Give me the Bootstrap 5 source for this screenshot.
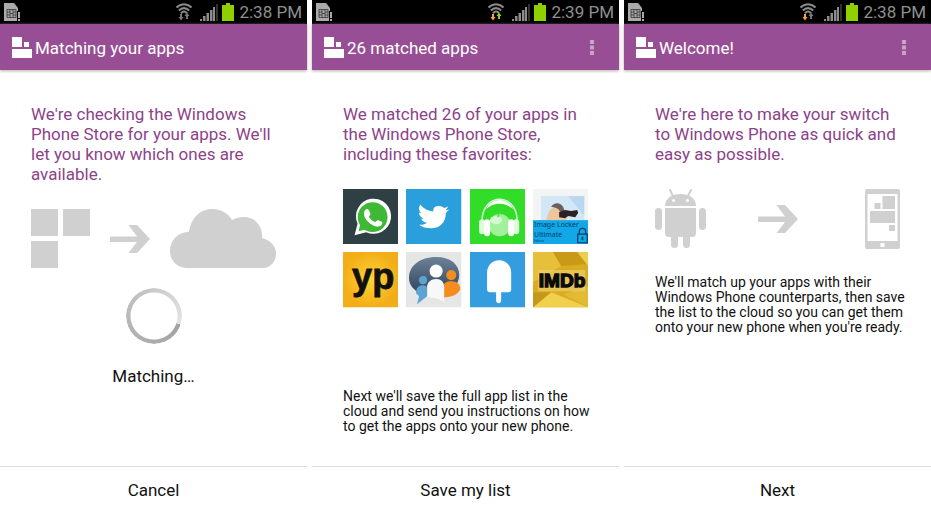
<!DOCTYPE html>
<html lang="en">
<head>
<meta charset="utf-8">
<meta name="viewport" content="width=device-width, initial-scale=1">
<title>Switch to Windows Phone</title>
<link href="https://cdn.jsdelivr.net/npm/bootstrap@5.3.0/dist/css/bootstrap.min.css" rel="stylesheet">
<style>
body { font-family: Roboto, "Liberation Sans", sans-serif; color: #111; }
.screens { gap: 5px; }
.screen { flex: 1 1 0; min-width: 0; }
.statusbar { height: 24px; background: #000; color: #8f8f8f; font-size: 17px; line-height: 24px; padding: 0 5px 0 4px; }
.statusbar .clock { margin-left: 5px; }
.appbar { height: 46px; background: #984e94; color: #fff; padding: 2px 12px 0; box-shadow: 0 1px 3px #b5b0a8; }
.appbar h1 { font-size: 17px; line-height: 24px; font-weight: 400; margin-left: 3px; }
.overflow-btn { width: 30px; height: 40px; }
.content { padding: 34px 31px 24px; }
.lead-text { color: #8c4389; font-size: 17px; line-height: 20px; margin: 0 -6px 25px 0; }
.note { font-size: 14px; line-height: 15px; margin-right: -6px; }
.journey { margin-bottom: 26px; }
.phone-cell { width: 51px; }
.tiles { display: grid; grid-template-columns: repeat(4, 1fr); gap: 8px; margin-bottom: 81px; }
.tiles svg { display: block; width: 100%; height: auto; }
.ring { width: 56px; height: 56px; border-radius: 50%;
  background: conic-gradient(from 108deg, #a3a3a3, #b0b0b0 30%, #c2c2c2 60%, #e4e4e4);
  -webkit-mask: radial-gradient(circle, transparent 23px, #000 24px); mask: radial-gradient(circle, transparent 23px, #000 24px); }
.matching { font-size: 17px; line-height: 24px; }
.footer-btn { height: 46px; border-top: 1px solid #ddd; font-size: 17px; line-height: 24px; color: #111; }
</style>
<script src="https://cdn.jsdelivr.net/npm/bootstrap@5.3.0/dist/js/bootstrap.bundle.min.js"></script>
</head>
<body class="bg-white">
<svg class="d-none" aria-hidden="true">
  <symbol id="sim" viewBox="0 0 17 20">
    <path d="M0 1h10l4 5v13H0z" fill="#aaa"/>
    <path d="M3 7.500h9v8H3zM6 7.500v8M9 7.500v8M3 10h3M9 10h3M3 13h3M9 13h3M6 11.500h3" fill="none" stroke="#333" stroke-width=".8"/>
    <path d="M13 9h4v11h-4z" fill="#000"/><path d="M14 10h2v6h-2zM14 17h2v2h-2z" fill="#aaa"/>
  </symbol>
  <symbol id="wifi" viewBox="0 0 16 18">
    <g fill="none" stroke="#8c8c8c" stroke-width="2"><path d="M.5 4.500Q8-2 15.500 4.500M2.800 7.500Q8 2.800 13.200 7.500M5 10.200Q8 7 11 10.200"/></g>
    <path d="M4 11h2v3h1.500L5 17.500 2.500 14H4z" fill="var(--down)"/>
    <path d="M10 16h2v-3h1.500L11 9.500 8.500 13H10z" fill="var(--up)"/>
  </symbol>
  <symbol id="signal" viewBox="0 0 18 18">
    <path d="M0 16h2v2H0zM3 13h2.500v5H3zM6.500 10H9v8H6.500zM10 7h2.500v11H10zM13 4h2v14h-2z" fill="#8c8c8c"/><path d="M16 1h2v17h-2z" fill="#333"/>
  </symbol>
  <symbol id="battery" viewBox="0 0 12 18"><path d="M0 2h4V0h4v2h4v16H0z" fill="#8fd000"/></symbol>
  <symbol id="logo" viewBox="0 0 20 22"><path d="M0 0h10v10H0zM12 5h5v5h-5zM0 12h20v9H0z" fill="#fff"/></symbol>
  <symbol id="dots" viewBox="0 0 4 16"><path d="M0 0h4v4H0zM0 5.500h4v4H0zM0 11h4v4H0z" fill="#c9a3c7"/></symbol>
  <symbol id="arrow" viewBox="0 0 40 28"><path d="M0 11.500h27L18.500 0H27l13 14-13 14h-8.500L27 17H0z" fill="#d0d0d0"/></symbol>
</svg>

<main class="screens d-flex min-vh-100">
  <section class="screen d-flex flex-column">
    <div class="statusbar d-flex align-items-center">
      <svg class="me-auto" width="17" height="20"><use href="#sim"/></svg>
      <svg width="16" height="18" style="--down:#777;--up:#777"><use href="#wifi"/></svg>
      <svg class="ms-2" width="18" height="18"><use href="#signal"/></svg>
      <svg class="ms-1" width="12" height="18"><use href="#battery"/></svg>
      <span class="clock">2:38 PM</span>
    </div>
    <header class="appbar d-flex align-items-center">
      <svg width="20" height="22"><use href="#logo"/></svg>
      <h1 class="mb-0">Matching your apps</h1>
    </header>
    <div class="content flex-grow-1">
      <p class="lead-text">We're checking the Windows Phone Store for your apps. We'll let you know which ones are available.</p>
      <div class="d-flex align-items-center justify-content-between">
        <svg width="59" height="59" viewBox="0 0 59 59"><path d="M0 0h27v27H0zM32 0h27v27H32zM0 32h27v27H0z" fill="#d0d0d0"/></svg>
        <svg width="40" height="28"><use href="#arrow"/></svg>
        <svg width="106" height="59" viewBox="0 0 106 59"><path d="M16 59C6 58 0 51 0 42C0 31 8 23 19 23C21 9 30 0 42 0C51 0 58 4 62 11C66 9 69 8 74 8C85 8 93 17 92 29C100 31 106 37 106 44C106 53 101 58 94 59z" fill="#d0d0d0"/></svg>
      </div>
      <div class="d-flex flex-column align-items-center pt-3 mt-1" role="status">
        <div class="ring"></div>
        <div class="matching mt-3 pt-1">Matching…</div>
      </div>
    </div>
    <button type="button" class="footer-btn btn rounded-0 border-start-0 border-end-0 border-bottom-0 p-0">Cancel</button>
  </section>

  <section class="screen d-flex flex-column">
    <div class="statusbar d-flex align-items-center">
      <svg class="me-auto" width="17" height="20"><use href="#sim"/></svg>
      <svg width="16" height="18" style="--down:#f7a541;--up:#8fd000"><use href="#wifi"/></svg>
      <svg class="ms-2" width="18" height="18"><use href="#signal"/></svg>
      <svg class="ms-1" width="12" height="18"><use href="#battery"/></svg>
      <span class="clock">2:39 PM</span>
    </div>
    <header class="appbar d-flex align-items-center">
      <svg width="20" height="22"><use href="#logo"/></svg>
      <h1 class="mb-0">26 matched apps</h1>
      <button type="button" class="overflow-btn btn p-0 border-0 ms-auto d-flex align-items-center justify-content-center" aria-label="More options"><svg width="4" height="16"><use href="#dots"/></svg></button>
    </header>
    <div class="content flex-grow-1">
      <p class="lead-text">We matched 26 of your apps in the Windows Phone Store, including these favorites:</p>
      <div class="tiles">
        <svg viewBox="0 0 55 55" role="img" aria-label="WhatsApp">
          <rect width="55" height="55" fill="#2f4044"/>
          <path d="M11.500 46l3-11.500A17.500 17.500 0 1 1 23 43z" fill="#fff"/>
          <circle cx="29.500" cy="28" r="14.800" fill="#3fb835"/><path d="M15.500 42l2-8 6 6z" fill="#3fb835"/>
          <path d="M22 21c1.500-1.500 3-1.500 4 .5l1.300 3c.4 1-.8 2-1.500 3 1.300 2.600 3.600 4.400 6.300 5.400 1-1 1.900-2.300 3-1.800l3.400 1.600c1.500.9.4 3-1 4-3.500 2.300-9.500-.8-12.500-4C21.500 29.500 19.500 24.500 22 21z" fill="#fff"/>
        </svg>
        <svg viewBox="0 0 55 55" role="img" aria-label="Twitter">
          <rect width="55" height="55" fill="#2a9fdb"/>
          <path d="M13 35.500c3.500.3 6-.5 8-2-3-.3-5-1.800-5.800-4h2.500c-3-1-4.700-3.300-4.800-6l2.400.6c-2.500-2.200-3-5.100-1.500-8 0 0 .8-1.300.5-.3 3.500 4 7.500 6.200 13 6.600C26.500 18 30 17 33 17c2 0 3.600.8 5 2l4-1.500-2.400 3.700 3.400-.8-3.300 3.400C39.600 33 34 39 25 39c-5 0-9-1-12-3.500z" fill="#fff"/>
        </svg>
        <svg viewBox="0 0 55 55" role="img" aria-label="Music headphones">
          <rect width="55" height="55" fill="#31dd28"/>
          <circle cx="29.500" cy="36" r="11" fill="#a3f09b"/><ellipse cx="26" cy="31" rx="6" ry="4" fill="#d3fbd0"/>
          <path d="M28 28q0-3 2-4" fill="none" stroke="#75c66d" stroke-width="1.500"/>
          <path d="M12 32C12 3 47 3 47 32" fill="none" stroke="#d5fbd1" stroke-width="1.500"/>
          <path d="M16 20C22 8 37 8 43 20 35 13 24 13 16 20z" fill="#fff"/>
          <rect x="9" y="30" width="6" height="15" rx="3" fill="#dcffda"/><rect x="14" y="30" width="6" height="17" rx="3" fill="#fff"/>
          <rect x="43" y="30" width="6" height="15" rx="3" fill="#dcffda"/><rect x="38" y="30" width="6" height="17" rx="3" fill="#fff"/>
        </svg>
        <svg viewBox="0 0 55 55" role="img" aria-label="Image Locker Ultimate">
          <rect width="55" height="55" fill="#f4f4f4"/><path d="M8 7h43v25H8z" fill="#d3e8f7"/><path d="M35 7h16v20z" fill="#b9d7ef"/>
          <path d="M13 31c1-5 3-9 6-12 3-3 7-3 9 0l6 12z" fill="#ecc79d"/><path d="M18 18c3-5 9-5 12 0l2 5-4 1c-2-4-5-6-10-6z" fill="#6a5e5e"/><path d="M26 23l6-2 6 1 6-1 1 3-3 4-7-1-3 2-6-1z" fill="#2c2223"/>
          <rect y="31" width="55" height="24" fill="#12a8e8"/>
          <g font-family="'Noto Sans', sans-serif" fill="#073a63"><text x="1" y="38" font-size="7">Image Locker</text><text x="1" y="48" font-size="7">Ultimate</text><text x="1" y="53" font-size="3">Edition</text></g>
          <path d="M44.500 45h9.500v8.500h-9.500zM46 45v-2c0-5 6.500-5 6.500 0v2" fill="none" stroke="#073a63" stroke-width="1.200"/><path d="M49.200 47.500v3.500" stroke="#073a63" stroke-width="1.500"/>
        </svg>
        <svg viewBox="0 0 55 55" role="img" aria-label="YP">
          <defs><radialGradient id="ypg"><stop offset="0" stop-color="#fdd535"/><stop offset="1" stop-color="#f3ad18"/></radialGradient></defs>
          <rect width="55" height="55" fill="url(#ypg)"/>
          <text x="30" y="37" text-anchor="middle" font-family="'Liberation Sans', sans-serif" font-weight="700" font-size="36" fill="#111" stroke="#111" stroke-width=".8">yp</text>
        </svg>
        <svg viewBox="0 0 55 55" role="img" aria-label="Group chat">
          <defs><linearGradient id="chg" x2="0" y2="1"><stop offset="0" stop-color="#6d8298"/><stop offset="1" stop-color="#283f56"/></linearGradient></defs>
          <rect width="55" height="55" fill="#e6e6e6"/>
          <path d="M3 27C2 14 14 5 30 5c15 0 23 8 23 18 0 9-8 19-20 21-15 1-29-5-30-17z" fill="url(#chg)"/>
          <circle cx="17" cy="28" r="4" fill="#5da3d2"/><path d="M10 41c0-6 3-8 7-8 3 0 4 1 4 3v8l-10 8 2-8z" fill="#5da3d2"/>
          <circle cx="45" cy="23" r="5" fill="#f58d1e"/><path d="M37 45V34c1-4 4-5 8-5 6 0 9 3 9 8-2 5-8 8-17 8z" fill="#f58d1e"/>
          <circle cx="30" cy="19" r="6.500" fill="#fff"/><path d="M21 45V35c0-5 4-8 9-8s8 3 8 8v15c-5-4-11-5-17-5z" fill="#f8f8f8"/>
        </svg>
        <svg viewBox="0 0 55 55" role="img" aria-label="Ice pop">
          <rect width="55" height="55" fill="#349de0"/>
          <path d="M17 21C17 4 41 4 41 21v16q0 3-3 3h-7v8c0 4-5 4-5 0v-8h-6q-3 0-3-3z" fill="#fff"/>
        </svg>
        <svg viewBox="0 0 55 55" role="img" aria-label="IMDb">
          <rect width="55" height="55" fill="#d9ac21"/><path d="M0 0h20l8 14L0 30z" fill="#e6c03a"/><path d="M20 0h35v12L28 14z" fill="#c99a18"/><path d="M44 0h11v14z" fill="#edcf4f"/><path d="M0 55l18-15 37 15z" fill="#f0d04d"/><path d="M30 42l25-8v21z" fill="#e3ba33"/><path d="M0 40l18 0L0 55z" fill="#c6981a"/>
          <path d="M5 18h47v21H5z" fill="#efd476" opacity=".6"/>
          <text x="29" y="35" text-anchor="middle" font-family="'Liberation Sans', sans-serif" font-weight="700" font-size="19" fill="#0b0b0b" stroke="#0b0b0b" stroke-width="1.400">IMDb</text>
        </svg>
      </div>
      <p class="note mb-0">Next we'll save the full app list in the cloud and send you instructions on how to get the apps onto your new phone.</p>
    </div>
    <button type="button" class="footer-btn btn rounded-0 border-start-0 border-end-0 border-bottom-0 p-0">Save my list</button>
  </section>

  <section class="screen d-flex flex-column">
    <div class="statusbar d-flex align-items-center">
      <svg class="me-auto" width="17" height="20"><use href="#sim"/></svg>
      <svg width="16" height="18" style="--down:#f7a541;--up:#777"><use href="#wifi"/></svg>
      <svg class="ms-2" width="18" height="18"><use href="#signal"/></svg>
      <svg class="ms-1" width="12" height="18"><use href="#battery"/></svg>
      <span class="clock">2:38 PM</span>
    </div>
    <header class="appbar d-flex align-items-center">
      <svg width="20" height="22"><use href="#logo"/></svg>
      <h1 class="mb-0">Welcome!</h1>
      <button type="button" class="overflow-btn btn p-0 border-0 ms-auto d-flex align-items-center justify-content-center" aria-label="More options"><svg width="4" height="16"><use href="#dots"/></svg></button>
    </header>
    <div class="content flex-grow-1">
      <p class="lead-text">We're here to make your switch to Windows Phone as quick and easy as possible.</p>
      <div class="journey d-flex align-items-center justify-content-between">
        <svg width="51" height="60" viewBox="0 0 51 60">
          <g fill="#d0d0d0"><path d="M10 17C10 9 17 5 25.500 5S41 9 41 17z"/><path d="M18 7l-3-6M33 7l3-6" stroke="#d0d0d0" stroke-width="2" stroke-linecap="round"/>
          <path d="M10 19h31v25q0 4-4 4H14q-4 0-4-4z"/><rect y="19" width="7" height="22" rx="3.500"/><rect x="44" y="19" width="7" height="22" rx="3.500"/><rect x="16" y="40" width="7" height="19" rx="3.500"/><rect x="28" y="40" width="7" height="19" rx="3.500"/></g>
          <circle cx="18.500" cy="11.500" r="1.500" fill="#fff"/><circle cx="32.500" cy="11.500" r="1.500" fill="#fff"/>
        </svg>
        <svg width="40" height="28"><use href="#arrow"/></svg>
        <div class="phone-cell d-flex justify-content-end">
          <svg width="35" height="60" viewBox="0 0 35 60">
            <rect width="35" height="60" rx="2" fill="#d0d0d0"/><path d="M2.500 5h30v47h-30zM15.500 54h4v4h-4z" fill="#fff"/>
            <path d="M17.500 7H30v13H17.500zM9.500 14h6v6h-6zM5 22h25v12H5zM24 36h6v6h-6z" fill="#d0d0d0"/>
          </svg>
        </div>
      </div>
      <p class="note mb-0">We'll match up your apps with their Windows Phone counterparts, then save the list to the cloud so you can get them onto your new phone when you're ready.</p>
    </div>
    <button type="button" class="footer-btn btn rounded-0 border-start-0 border-end-0 border-bottom-0 p-0">Next</button>
  </section>
</main>
</body>
</html>
